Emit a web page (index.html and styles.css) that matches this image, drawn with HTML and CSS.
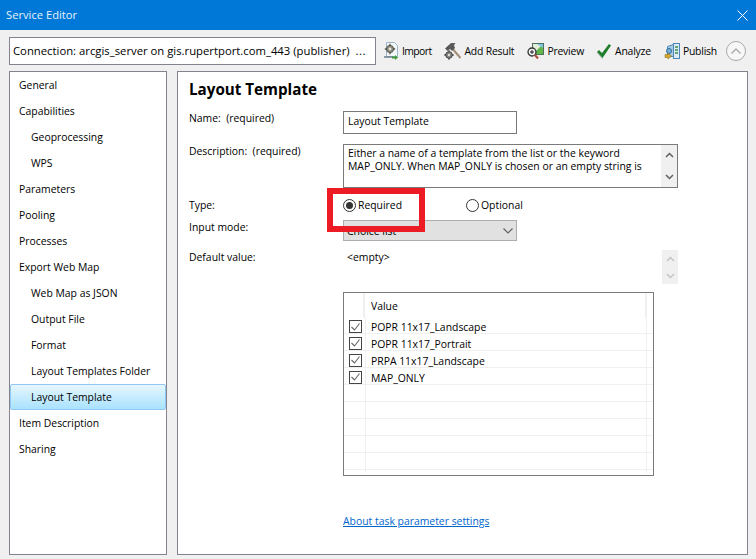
FILE: index.html
```html
<!DOCTYPE html>
<html lang="en">
<head>
<meta charset="utf-8">
<title>Service Editor</title>
<link rel="stylesheet" href="styles.css">
</head>
<body>
<div class="window">
  <header class="titlebar">
    <span class="title">Service Editor</span>
    <svg class="close" width="11" height="11" viewBox="0 0 11 11"><path d="M.5.5l10 10M10.500.5l-10 10" stroke="#fff" stroke-width="1" fill="none"/></svg>
  </header>
  <div class="toolbar">
    <div class="connection"><span>Connection: arcgis_server on gis.rupertport.com_443 (publisher)</span><span class="dots">...</span></div>
    <div class="tool imp">
      <svg width="16" height="18" viewBox="0 0 16 18"><path d="M3.500.5h8l3 3v11h-11z" fill="#f4f7fa" stroke="#9db4c8"/><circle cx="7" cy="7" r="3.600" fill="#8a8a80" stroke="#55554d"/><circle cx="7" cy="7" r="1.400" fill="#e8e8e0"/><path d="M7 1.800v2M7 10.200v2M1.800 7h2M10.200 7h2" stroke="#55554d" stroke-width="1.400"/><path d="M1 15h9" stroke="#6b7f8c" stroke-width="1.500"/><path d="M9 15.500h4" stroke="#3c9a3c" stroke-width="2"/><path d="M12 13l3 2.500-3 2.500z" fill="#3c9a3c"/></svg>
      <span>Import</span>
    </div>
    <div class="tool add">
      <svg width="17" height="18" viewBox="0 0 17 18"><path d="M7 5l9.500 11" stroke="#a08e72" stroke-width="2"/><path d="M1.500 6.500L7 1.500h4L9.500 3 10.500 6 8 8.500 6 6.500 3.500 8.500z" fill="#5a5a5a" stroke="#333" stroke-width=".6"/><circle cx="5" cy="13" r="3.300" fill="#85857d" stroke="#444"/><circle cx="5" cy="13" r="1.200" fill="#ddd"/><path d="M5 8.300v1.600M5 16.100v1.600M.3 13h1.600M8.100 13h1.600" stroke="#444" stroke-width="1.300"/></svg>
      <span>Add Result</span>
    </div>
    <div class="tool pre">
      <svg width="17" height="18" viewBox="0 0 17 18"><rect x="5.500" y="1.500" width="11" height="11" fill="#e3efdc" stroke="#4f6f5d"/><path d="M6 12L16 2v10z" fill="#63b54b"/><path d="M10 2h6v4z" fill="#7cc6e8"/><circle cx="5" cy="10" r="4" fill="#f3f3f3" stroke="#333" stroke-width="1.300"/><path d="M3 10h4M5 8v4" stroke="#222"/><path d="M8 13l3 3.500" stroke="#b04a3a" stroke-width="2"/></svg>
      <span>Preview</span>
    </div>
    <div class="tool ana">
      <svg width="16" height="16" viewBox="0 0 16 16"><path d="M1 9l2-2 3 3 7-9 2 1.500L6.500 15z" fill="#1f7d2c"/><path d="M1.500 10l5 6" stroke="#bbb" stroke-width="1" fill="none"/></svg>
      <span>Analyze</span>
    </div>
    <div class="tool pub">
      <svg width="16" height="18" viewBox="0 0 16 18"><rect x="9.500" y="1.500" width="6" height="15" fill="#dcebf7" stroke="#4f86b8"/><path d="M11 5h3M11 8h3M11 11h3" stroke="#3b8f4b" stroke-width="1.300"/><path d="M3.500 4.500l6-2v12h-6z" fill="#a9cbe6" stroke="#4f86b8"/><circle cx="5" cy="9" r="2.500" fill="#6fb0dc" stroke="#3a6e96"/><path d="M1 12.500h3V11l3.500 3L4 17v-1.500H1z" fill="#d6a92c" stroke="#7d6518" stroke-width=".5"/></svg>
      <span>Publish</span>
    </div>
    <button class="collapse" type="button" aria-label="Collapse">
      <svg width="10" height="6" viewBox="0 0 10 6"><path d="M.5 5.500L5 1l4.500 4.500" fill="none" stroke="#a8a8a8" stroke-width="1.300"/></svg>
    </button>
  </div>
  <div class="body">
    <nav class="sidebar">
      <div class="nav">General</div>
      <div class="nav">Capabilities</div>
      <div class="nav sub">Geoprocessing</div>
      <div class="nav sub">WPS</div>
      <div class="nav">Parameters</div>
      <div class="nav">Pooling</div>
      <div class="nav">Processes</div>
      <div class="nav">Export Web Map</div>
      <div class="nav sub">Web Map as JSON</div>
      <div class="nav sub">Output File</div>
      <div class="nav sub">Format</div>
      <div class="nav sub">Layout Templates Folder</div>
      <div class="nav sub active">Layout Template</div>
      <div class="nav">Item Description</div>
      <div class="nav">Sharing</div>
    </nav>
    <main class="panel">
      <h1>Layout Template</h1>
      <div class="row row-name">
        <label class="lbl">Name:&nbsp; (required)</label>
        <div class="textbox">Layout Template</div>
      </div>
      <div class="row row-desc">
        <label class="lbl">Description:&nbsp; (required)</label>
        <div class="textarea">
          <p>Either a name of a template from the list or the keyword MAP_ONLY. When MAP_ONLY is chosen or an empty string is</p>
          <div class="vscroll">
            <svg width="9" height="6" viewBox="0 0 9 6"><path d="M1 5l3.500-3.500L8 5" fill="none" stroke="#606060" stroke-width="1.500"/></svg>
            <svg width="9" height="6" viewBox="0 0 9 6"><path d="M1 1l3.500 3.500L8 1" fill="none" stroke="#606060" stroke-width="1.500"/></svg>
          </div>
        </div>
      </div>
      <div class="row row-type">
        <label class="lbl">Type:</label>
        <div class="radios">
          <div class="radio-item first"><span class="radio on"></span>Required</div>
          <div class="radio-item"><span class="radio"></span>Optional</div>
        </div>
        <div class="callout"></div>
      </div>
      <div class="row row-mode">
        <label class="lbl">Input mode:</label>
        <div class="select">Choice list
          <svg width="10" height="6" viewBox="0 0 10 6"><path d="M.5.500L5 5 9.500.5" fill="none" stroke="#606060" stroke-width="1.100"/></svg>
        </div>
      </div>
      <div class="row row-default">
        <label class="lbl">Default value:</label>
        <div class="empty-wrap">
          <span class="empty">&lt;empty&gt;</span>
          <div class="vscroll muted">
            <svg width="9" height="6" viewBox="0 0 9 6"><path d="M1 5l3.500-3.500L8 5" fill="none" stroke="#c4c4c4" stroke-width="1.500"/></svg>
            <svg width="9" height="6" viewBox="0 0 9 6"><path d="M1 1l3.500 3.500L8 1" fill="none" stroke="#c4c4c4" stroke-width="1.500"/></svg>
          </div>
        </div>
      </div>
      <div class="grid">
        <div class="grid-head"><div class="c-check"></div><div class="c-value">Value</div><div class="c-end"></div></div>
        <div class="grid-body">
          <div class="grid-row"><div class="c-check"><span class="check"><svg width="9" height="8" viewBox="0 0 9 8"><path d="M.5 4l3 3L8.500.5" fill="none" stroke="#666" stroke-width="1.100"/></svg></span></div><div class="c-value">POPR 11x17_Landscape</div><div class="c-end"></div></div>
          <div class="grid-row"><div class="c-check"><span class="check"><svg width="9" height="8" viewBox="0 0 9 8"><path d="M.5 4l3 3L8.500.5" fill="none" stroke="#666" stroke-width="1.100"/></svg></span></div><div class="c-value">POPR 11x17_Portrait</div><div class="c-end"></div></div>
          <div class="grid-row"><div class="c-check"><span class="check"><svg width="9" height="8" viewBox="0 0 9 8"><path d="M.5 4l3 3L8.500.5" fill="none" stroke="#666" stroke-width="1.100"/></svg></span></div><div class="c-value">PRPA 11x17_Landscape</div><div class="c-end"></div></div>
          <div class="grid-row"><div class="c-check"><span class="check"><svg width="9" height="8" viewBox="0 0 9 8"><path d="M.5 4l3 3L8.500.5" fill="none" stroke="#666" stroke-width="1.100"/></svg></span></div><div class="c-value">MAP_ONLY</div><div class="c-end"></div></div>
          <div class="grid-row"><div class="c-check"></div><div class="c-value"></div><div class="c-end"></div></div>
          <div class="grid-row"><div class="c-check"></div><div class="c-value"></div><div class="c-end"></div></div>
          <div class="grid-row"><div class="c-check"></div><div class="c-value"></div><div class="c-end"></div></div>
          <div class="grid-row"><div class="c-check"></div><div class="c-value"></div><div class="c-end"></div></div>
          <div class="grid-row"><div class="c-check"></div><div class="c-value"></div><div class="c-end"></div></div>
          <div class="grid-row"><div class="c-check"></div><div class="c-value"></div><div class="c-end"></div></div>
        </div>
      </div>
      <a class="about" href="#">About task parameter settings</a>
    </main>
  </div>
</div>
</body>
</html>
```

FILE: styles.css
```css
* { box-sizing: border-box; }
html, body { margin: 0; padding: 0; }
body {
  width: 756px;
  height: 559px;
  overflow: hidden;
  background: #f0f0f0;
  color: #000;
  font-family: "Open Sans", "Noto Sans", sans-serif;
  font-size: 10.4px;
  line-height: 16px;
}
.window { display: flex; flex-direction: column; height: 559px; }

.titlebar {
  height: 30px;
  flex: none;
  background: #0078d7;
  color: #e8f2fb;
  display: flex;
  align-items: center;
  justify-content: space-between;
  padding: 0 8px 0 6px;
  font-size: 11.2px;
}

.toolbar {
  height: 41px;
  flex: none;
  display: flex;
  align-items: center;
  padding: 0 10px 0 9px;
}
.connection {
  width: 367px;
  height: 28px;
  flex: none;
  background: #fff;
  border: 1px solid #83838f;
  display: flex;
  align-items: center;
  justify-content: space-between;
  padding: 0 9px 0 3px;
  white-space: nowrap;
  font-size: 11.3px;
}
.dots { letter-spacing: .5px; }
.tool { display: flex; align-items: center; gap: 3px; white-space: nowrap; flex: none; }
.tool span { letter-spacing: -.2px; }
.imp { margin-left: 7px; }
.imp span { letter-spacing: -.6px; }
.add { margin-left: 13px; }
.pre { margin-left: 13px; }
.ana { margin-left: 12px; }
.pub { margin-left: 13px; }
.collapse {
  margin-left: auto;
  width: 20px;
  height: 20px;
  flex: none;
  padding: 0;
  border: 1px solid #a8a8a8;
  border-radius: 50%;
  background: #f7f7f7;
  display: flex;
  align-items: center;
  justify-content: center;
}

.body {
  flex: none;
  height: 484px;
  display: flex;
  gap: 10px;
  padding: 0 8px 0 9px;
}
.sidebar {
  width: 158px;
  background: #fff;
  border: 1px solid #83838f;
  padding: 0;
}
.nav {
  height: 26px;
  display: flex;
  align-items: center;
  padding-left: 8px;
  border: 1px solid transparent;
  border-radius: 2px;
}
.nav.sub { padding-left: 20px; }
.nav.active {
  background: linear-gradient(#e6f6ff, #a9e2fe);
  border-color: #90c8f6;
}

.panel {
  flex: 1;
  background: #fff;
  border: 1px solid #83838f;
  padding: 0 11px;
  display: flex;
  flex-direction: column;
  position: relative;
}
h1 {
  margin: 7px 0 0;
  font-size: 15.2px;
  line-height: 20px;
  font-weight: 700;
}
.row { display: flex; position: relative; }
.lbl { width: 154px; flex: none; }
.row-name { margin-top: 12px; height: 23px; }
.row-name .lbl { margin-top: -1px; }
.textbox {
  width: 174px;
  height: 23px;
  border: 1px solid #7a7a7a;
  padding: 1px 4px;
}
.row-desc { margin-top: 10px; height: 44px; }
.row-desc .lbl { margin-top: -1px; }
.textarea {
  width: 335px;
  height: 44px;
  border: 1px solid #7a7a7a;
  padding: 2px 0 0 4px;
  display: flex;
  line-height: 13px;
}
.textarea p { margin: 0; flex: 1; padding-right: 12px; }
.vscroll {
  width: 16px;
  flex: none;
  background: #f0f0f0;
  display: flex;
  flex-direction: column;
  align-items: center;
  justify-content: space-between;
  padding: 7px 0;
}
.textarea .vscroll { margin-top: -2px; height: 42px; }

.row-type { margin-top: 9px; height: 16px; }
.radios { display: flex; }
.radio-item { display: flex; align-items: center; gap: 2px; }
.radio-item.first { width: 123px; }
.radio {
  width: 13px;
  height: 13px;
  border: 1px solid #333;
  border-radius: 50%;
  background: #fff;
  display: flex;
  align-items: center;
  justify-content: center;
}
.radio.on::after {
  content: "";
  width: 7px;
  height: 7px;
  border-radius: 50%;
  background: #333;
}
.callout {
  position: absolute;
  left: 138px;
  top: -9px;
  width: 98px;
  height: 44px;
  border: 6px solid #ed1c24;
  z-index: 2;
}

.row-mode { margin-top: 7px; height: 21px; }
.row-mode .lbl { margin-top: -1px; }
.select {
  width: 174px;
  height: 21px;
  background: #e1e1e1;
  border: 1px solid #adadad;
  display: flex;
  align-items: center;
  justify-content: space-between;
  padding: 0 3px 0 3px;
}
.row-default { margin-top: 9px; height: 34px; }
.row-default .lbl { margin-top: -1px; }
.empty-wrap { width: 335px; display: flex; justify-content: space-between; }
.empty { padding-left: 4px; margin-top: -1px; }
.vscroll.muted { height: 34px; padding: 6px 0 5px; }

.grid {
  margin: 8px 0 0 154px;
  width: 311px;
  height: 184px;
  border: 1px solid #7a7a7a;
  flex: none;
}
.grid-head { height: 25px; display: flex; align-items: center; }
.grid-head .c-check { height: 25px; width: 21px; border-right: 2px solid #f0f0f0; }
.grid-head .c-value { width: 280px; padding-left: 6px; }
.grid-head .c-end { height: 25px; border-left: 2px solid #f0f0f0; }
.grid-body { height: 155px; overflow: hidden; }
.grid-row { height: 17px; display: flex; align-items: center; border-bottom: 1px solid #f0f0f0; }
.grid-row:first-child { height: 16px; }
.grid-row .c-value { padding-top: 3px; }
.grid-row .c-check { padding-top: 2px; }
.c-check {
  width: 22px;
  height: 100%;
  flex: none;
  display: flex;
  align-items: center;
  justify-content: center;
  border-right: 1px solid #f0f0f0;
  padding-left: 1px;
}
.c-value { width: 280px; flex: none; padding-left: 5px; }
.c-end { flex: 1; height: 100%; border-left: 1px solid #f0f0f0; }
.check {
  width: 13px;
  height: 13px;
  flex: none;
  border: 1px solid #444;
  background: #fff;
  display: flex;
  align-items: center;
  justify-content: center;
}
.about {
  margin: 37px 0 0 154px;
  color: #0066cc;
  text-decoration: underline;
  align-self: flex-start;
}
```
